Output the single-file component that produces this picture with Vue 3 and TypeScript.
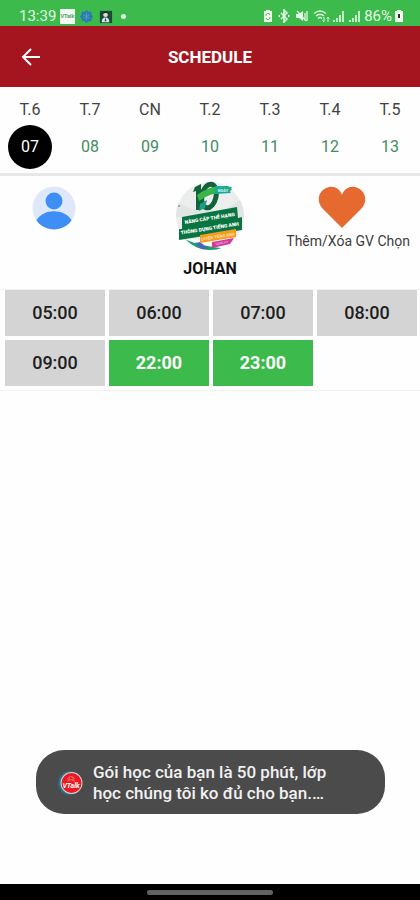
<script setup lang="ts">
import { ref } from 'vue'

interface Day {
  label: string
  date: string
}

interface Slot {
  time: string
  open: boolean
}

const days: Day[] = [
  { label: 'T.6', date: '07' },
  { label: 'T.7', date: '08' },
  { label: 'CN', date: '09' },
  { label: 'T.2', date: '10' },
  { label: 'T.3', date: '11' },
  { label: 'T.4', date: '12' },
  { label: 'T.5', date: '13' },
]

const slots: Slot[] = [
  { time: '05:00', open: false },
  { time: '06:00', open: false },
  { time: '07:00', open: false },
  { time: '08:00', open: false },
  { time: '09:00', open: false },
  { time: '22:00', open: true },
  { time: '23:00', open: true },
]

const selected = ref('07')
</script>

<template>
  <div class="screen">
    <div class="status">
      <div class="status-group">
        <span class="clock">13:39</span>
        <svg class="app-icon" viewBox="0 0 16 16" aria-hidden="true">
          <rect width="16" height="16" fill="#f2fbf3" />
          <text x="8" y="10" text-anchor="middle" font-size="6" font-weight="700" fill="#4fa15c">VTalk</text>
        </svg>
        <svg class="app-icon" viewBox="0 0 16 16" aria-hidden="true">
          <path d="M8 1l2 2 3 0 .5 3L15 8l-1.500 2-.5 3-3 0-2 2-2-2-3-.500-.5-2.500L1 8l1.500-2L3 3l3 0z" fill="#2d78b8" />
          <path d="M8 4v8M4.500 6l7 4M11.500 6l-7 4" stroke="#48a5a4" fill="none" />
        </svg>
        <svg class="app-icon" viewBox="0 0 16 16" aria-hidden="true">
          <rect x="2" y="2" width="13" height="13" fill="#164b38" />
          <circle cx="8" cy="6" r="2.500" fill="#e8dcc5" />
          <path d="M4 14c0-4 2-5 4-5s4 1 4 5z" fill="#dbe5e3" />
          <path d="M8 9l-1 4h2z" fill="#263a4d" />
          <path d="M5.500 5c0-3 5-3 5 0l-2-1z" fill="#172923" />
        </svg>
        <span class="more-dot"></span>
      </div>
      <div class="status-group right">
        <svg width="10" height="14" viewBox="0 0 10 14" aria-hidden="true">
          <path d="M3 1h4v1h2v11H1V2h2z" fill="#effbef" />
          <path d="M3 7a2 2 0 0 1 4-1M7 8a2 2 0 0 1-4 1" stroke="#3cba4b" fill="none" />
        </svg>
        <svg width="14" height="14" viewBox="0 0 14 14" fill="none" stroke="#e2f8e3" stroke-width="1.600" aria-hidden="true">
          <path d="M4 4l6 6-3 3V1l3 3-6 6" />
          <path d="M1.500 7h1.500M11 7h1.500" stroke-width="2" />
        </svg>
        <svg width="14" height="14" viewBox="0 0 14 14" aria-hidden="true">
          <path d="M1 5h3l4-3v10L4 9H1z" fill="#e8f9e9" />
          <path d="M2 2l9 10M10 4v6M12 2v10" stroke="#dff6e0" stroke-width="1.300" fill="none" />
        </svg>
        <svg width="17" height="14" viewBox="0 0 17 14" fill="none" stroke="#dcf5dd" stroke-width="1.400" aria-hidden="true">
          <path d="M1 4.500q6-5 12 0M3 7q4-3.500 8 0M5 9.500q2-2 4 0" />
          <path d="M11 8v5M9.500 11.500L11 13M15 13V8M13.500 9.500L15 8l1.500 1.500" stroke-width="1" />
        </svg>
        <svg v-for="n in 2" :key="n" width="14" height="14" viewBox="0 0 14 14" fill="#c4efc8" aria-hidden="true">
          <path d="M1 11h2v2H1zM4 9h2v4H4zM7 6h2v7H7zM10 2h2v11h-2z" />
        </svg>
        <span class="battery-level">86%</span>
        <svg width="10" height="14" viewBox="0 0 10 14" aria-hidden="true">
          <path d="M3 1h4v1h2v11H1V2h2z" fill="#effbef" />
          <path d="M5 5v4" stroke="#173a1c" stroke-width="2" />
        </svg>
      </div>
    </div>

    <header class="bar">
      <button class="back" type="button" aria-label="Back">
        <svg width="20" height="20" viewBox="0 0 20 20" fill="none" stroke="#fff" stroke-width="2" aria-hidden="true">
          <path d="M19 10H2M10 2l-8 8 8 8" />
        </svg>
      </button>
      <h1>SCHEDULE</h1>
    </header>

    <nav class="days">
      <button
        v-for="day in days"
        :key="day.date"
        class="day"
        :class="{ active: day.date === selected }"
        type="button"
        @click="selected = day.date"
      >
        <span class="weekday">{{ day.label }}</span>
        <span class="date">{{ day.date }}</span>
      </button>
    </nav>

    <section class="teacher">
      <div class="column">
        <svg width="44" height="44" viewBox="0 0 44 44" aria-hidden="true">
          <defs>
            <clipPath id="user-clip"><circle cx="22" cy="22" r="21.500" /></clipPath>
          </defs>
          <g clip-path="url(#user-clip)">
            <rect width="44" height="44" fill="#dfe8fb" />
            <circle cx="22" cy="15" r="8.500" fill="#3d8ef5" />
            <path d="M4 35C11 22 33 22 40 35V44H4z" fill="#3d8ef5" />
          </g>
        </svg>
      </div>
      <div class="column">
        <svg class="emblem" width="70" height="70" viewBox="0 0 70 70" aria-hidden="true">
          <defs>
            <clipPath id="emblem-clip"><circle cx="35" cy="35" r="34" /></clipPath>
          </defs>
          <g clip-path="url(#emblem-clip)">
            <rect width="70" height="70" fill="#eceeee" />
            <path d="M0 20l18 9 11-4 14 8 27-17v20H0z" fill="#e2e5e5" />
            <path d="M6 53q25 14 48-3v20H10z" fill="#fafcfb" />
            <path d="M8 57q12 7 38 10v3H24z" fill="#16a36a" />
            <path d="M20 62l5-1 9 7h-8z" fill="#4a68ba" />
          </g>
          <circle cx="4" cy="25" r="1" fill="#8b9494" />
          <path d="M20 6l6-3v26h-5V10l-3 1z" fill="#12633b" />
          <ellipse cx="34" cy="15" rx="7" ry="12" fill="none" stroke="#12633b" stroke-width="5" transform="rotate(12 34 15)" />
          <path d="M22 14q12-10 31-9l4 3-3 4q-17-2-30 8z" fill="#39b54a" />
          <path d="M40 5l17 1-3 4 2 2-16 1z" fill="#18a99c" />
          <text x="48" y="11" font-size="4" font-weight="700" fill="#d8f6ed" text-anchor="middle">NGÀY</text>
          <path d="M25 23l7-4-2 8-6 3z" fill="#1c9d89" />
          <path d="M7 36l55-10 1 11 4-1v13L4 59V48h3z" fill="#087540" />
          <g font-size="5" font-weight="900" fill="#fff">
            <text x="35" y="39" text-anchor="middle" transform="rotate(-9 35 39)">NÂNG CẤP THẺ HẠNG</text>
            <text x="35" y="49" text-anchor="middle" transform="rotate(-9 35 49)">THÔNG DỤNG TIẾNG ANH</text>
          </g>
          <path d="M25 54l36-6v8l-36 6z" fill="#f69a20" />
          <text x="43" y="57" font-size="4" font-weight="700" fill="#ffe5b5" text-anchor="middle" transform="rotate(-9 43 57)">LUYỆN TIẾNG ANH</text>
          <path d="M37 61l22-4-4 6-18 4z" fill="#ce3b9b" />
          <text x="47" y="63" font-size="3" fill="#ffd5ef" text-anchor="middle" transform="rotate(-10 47 63)">ĐĂNG KÝ</text>
        </svg>
        <strong class="name">JOHAN</strong>
      </div>
      <div class="column">
        <button class="favorite" type="button">
          <svg width="48" height="43" viewBox="0 0 48 43" aria-hidden="true">
            <path d="M24 42L5 23C-3 15 1 3 11 1c6-1 11 2 13 8 2-6 7-9 13-8 10 2 14 14 6 22z" fill="#e66a30" />
          </svg>
          <span>Thêm/Xóa GV Chọn</span>
        </button>
      </div>
    </section>

    <main class="slots">
      <button v-for="slot in slots" :key="slot.time" class="slot" :class="{ open: slot.open }" type="button">
        {{ slot.time }}
      </button>
    </main>

    <div class="space"></div>

    <div class="toast" role="status">
      <svg width="26" height="26" viewBox="0 0 26 26" aria-hidden="true">
        <circle cx="12" cy="13" r="12" fill="#287184" />
        <circle cx="13.500" cy="13" r="11" fill="#d9d3d5" />
        <circle cx="13.500" cy="13" r="10" fill="#ee1721" />
        <path d="M9 9q4-5 8 0M9 11q4-3 8 0M11 7v4M15 7v4" stroke="#f16970" fill="none" />
        <text x="13" y="18" text-anchor="middle" font-size="7" font-weight="700" font-style="italic" fill="#fff">VTalk</text>
      </svg>
      <p>Gói học của bạn là 50 phút, lớp học chúng tôi ko đủ cho bạn.…</p>
    </div>

    <footer class="system-nav"><span class="handle"></span></footer>
  </div>
</template>

<style>
body {
  margin: 0;
}
</style>

<style scoped>
.screen {
  position: relative;
  display: flex;
  flex-direction: column;
  min-height: 100vh;
  background: #fefefe;
  color: #202020;
  font-family: Roboto, "Noto Sans", sans-serif;
}

button {
  margin: 0;
  padding: 0;
  border: 0;
  background: none;
  color: inherit;
  font: inherit;
  cursor: pointer;
}

svg {
  display: block;
  flex: none;
}

.status {
  display: flex;
  align-items: flex-end;
  justify-content: space-between;
  box-sizing: border-box;
  height: 26px;
  padding: 0 16px 1px 19px;
  background: #3cba4b;
  color: #e4f8e5;
  font-size: 15px;
  line-height: 18px;
}

.status-group {
  display: flex;
  align-items: center;
  gap: 4px;
}

.right {
  gap: 2px;
}

.right svg:nth-child(-n + 3) {
  margin-right: 2px;
}

.app-icon {
  width: 15px;
  height: 15px;
}

.more-dot {
  width: 5px;
  height: 5px;
  margin-left: 4px;
  border-radius: 50%;
  background: #dff6e1;
}

.bar {
  display: grid;
  grid-template-columns: 48px 1fr 48px;
  align-items: center;
  height: 61px;
  background: #a51520;
  color: #fff;
}

.back {
  display: flex;
  justify-content: flex-end;
  padding: 12px 7px 12px 0;
}

h1 {
  margin: 0;
  font-size: 17px;
  font-weight: 700;
  line-height: 24px;
  text-align: center;
}

.days {
  display: grid;
  grid-template-columns: repeat(7, 1fr);
  padding: 13px 0 4px;
  border-bottom: 3px solid #e7e7e7;
}

.day {
  display: flex;
  flex-direction: column;
  align-items: center;
  gap: 5px;
  font-size: 16px;
  line-height: 20px;
}

.weekday {
  color: #424242;
}

.date {
  width: 44px;
  border-radius: 50%;
  color: #438b60;
  line-height: 44px;
}

.active .date {
  background: #000;
  color: #fff;
}

.teacher {
  display: grid;
  grid-template-columns: 108px 1fr 108px;
  box-sizing: border-box;
  height: 114px;
  padding-top: 5px;
  border-bottom: 1px solid #f1f1f1;
}

.column {
  display: flex;
  flex-direction: column;
  align-items: center;
}

.column:first-child {
  padding-top: 5px;
}

.column:last-child {
  align-items: flex-end;
  padding: 5px 10px 0 0;
}

.name {
  margin-top: 8px;
  font-size: 16px;
  font-weight: 700;
  line-height: 20px;
  color: #101010;
}

.favorite {
  display: flex;
  flex-direction: column;
  align-items: center;
  gap: 3px;
  color: #3d3d3d;
  font-size: 14px;
  line-height: 18px;
  white-space: nowrap;
}

.favorite svg {
  margin-right: 12px;
}

.slots {
  display: grid;
  grid-template-columns: repeat(4, 1fr);
  gap: 4px;
  padding: 0 3px 4px 5px;
  border-bottom: 1px solid #f1f1f1;
}

.slot {
  height: 46px;
  background: #d4d4d4;
  color: #202020;
  font-size: 18px;
  font-weight: 500;
  line-height: 24px;
}

.slot.open {
  background: #3cba4b;
  color: #fff;
  font-weight: 700;
}

.space {
  flex: 1;
}

.toast {
  position: absolute;
  right: 35px;
  bottom: 86px;
  left: 36px;
  display: flex;
  align-items: center;
  gap: 9px;
  box-sizing: border-box;
  padding: 12px 44px 10px 22px;
  border-radius: 28px;
  background: #4b4b4b;
  color: #f1f1f1;
}

.toast p {
  margin: 0;
  font-size: 17px;
  font-weight: 500;
  line-height: 21px;
}

.system-nav {
  display: flex;
  justify-content: center;
  height: 16px;
  background: #000;
}

.handle {
  width: 30%;
  height: 5px;
  margin-top: 6px;
  border-radius: 3px;
  background: #626262;
}
</style>
